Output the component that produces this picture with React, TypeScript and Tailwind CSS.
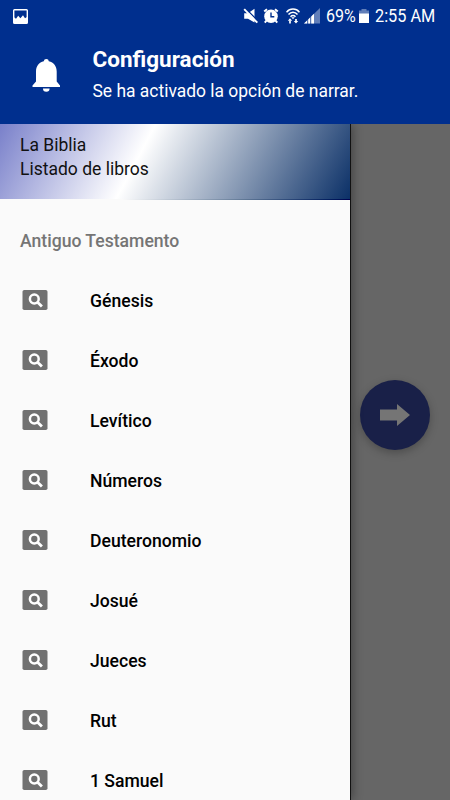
const books = [
  "Génesis",
  "Éxodo",
  "Levítico",
  "Números",
  "Deuteronomio",
  "Josué",
  "Jueces",
  "Rut",
  "1 Samuel",
];

function StatusBar() {
  return (
    <div className="flex h-8 items-center pl-[13px] pr-[14px]">
      <svg className="h-[15px] w-[15px]" viewBox="0 0 15 15">
        <rect x="0.7" y="0.7" width="13.6" height="13.6" rx="0.8" fill="none" stroke="#fff" strokeWidth="1.4" />
        <path d="M1 14V8.2L3 9.7l2.2-3 2.2 2.5L10 6.2l2 3 2-1.2v6z" fill="#fff" />
      </svg>
      <svg className="ml-auto h-4 w-4" viewBox="0 0 16 16">
        <path d="M1.2 5.2h3.8L11.5 0.8v13.7L5 10.7H1.2z" fill="#fff" />
        <path d="M2.3 0.3L15.5 13.5" stroke="#002f8e" strokeWidth="1.5" />
        <path d="M1.2 1.2L14.3 14.7" stroke="#fff" strokeWidth="1.9" />
      </svg>
      <svg className="ml-[4px] h-4 w-4" viewBox="0 0 16 16">
        <circle cx="8" cy="8.2" r="6.8" fill="#fff" />
        <path d="M1.200 3.600L4 1.200M14.800 3.600L12 1.200M3.500 12.500l-1.700 2.200M12.500 12.500l1.700 2.200" stroke="#fff" strokeWidth="2" />
        <path d="M8 4.500v4.200h3.300" fill="none" stroke="#002f8e" strokeWidth="1.400" />
      </svg>
      <svg className="ml-[7px] h-4 w-[14px]" viewBox="0 0 14 16" fill="none" stroke="#fff">
        <path d="M0.5 4.2C4 0 10 0 13.5 4.2M2.5 6.5c2.500-3 6.500-3 9 0M4.500 8.700c1.500-1.600 3.500-1.600 5 0" strokeWidth="1.5" />
        <path d="M5.3 9.2h3.400L7 11.200z" fill="#fff" stroke="none" />
        <path d="M1.8 12.7h4.400L4 10.300zM7.800 13h4.400L10 15.500z" fill="#fff" stroke="none" />
        <path d="M4 12.5v3M10 11v2.200" strokeWidth="1.700" />
      </svg>
      <svg className="ml-[4px] h-4 w-4" viewBox="0 0 16 16">
        <path d="M0 15.5L16 0v15.500z" fill="#fff" opacity="0.38" />
        <path d="M0 15.5L10 5.800v9.700z" fill="#fff" />
        <path d="M3.7 11v5M6.700 8v8" stroke="#002f8e" strokeWidth="0.8" />
      </svg>
      <span className="ml-[6px] w-[29px] origin-left scale-x-[0.89] whitespace-nowrap text-[18px] leading-none">
        69%
      </span>
      <svg className="ml-[4px] h-4 w-[10px]" viewBox="0 0 10 16">
        <path d="M2.5 1h5v1.500H10V6H0V2.500h2.500z" fill="#fff" opacity="0.38" />
        <path d="M0 5.500h10V15H0z" fill="#fff" />
      </svg>
      <span className="ml-[6px] w-[61px] origin-left scale-x-[0.905] whitespace-nowrap text-[18px] leading-none">
        2:55 AM
      </span>
    </div>
  );
}

function Notification() {
  return (
    <header className="h-[124px] bg-[#002f8e] text-white">
      <StatusBar />
      <div className="flex">
        <svg className="ml-[32px] mt-[27px] h-[33px] w-[29px]" viewBox="0 0 29 33" fill="#fff">
          <path d="M14.3 0a2.5 2.5 0 0 0-2.5 2.3C7 3.4 4 7.3 4 12.5v10L0.5 26.5V28h27.5v-1.5L24.7 22.5v-10c0-5.200-3-9.100-7.900-10.200A2.500 2.500 0 0 0 14.300 0z" />
          <path d="M11 29.500h6.600a3.300 3.300 0 0 1-6.600 0z" />
        </svg>
        <div className="ml-[31.5px] mt-[11px]">
          <h1 className="text-[22.5px] font-bold leading-[32px]">Configuración</h1>
          <p className="text-[17.45px] leading-[32px]">Se ha activado la opción de narrar.</p>
        </div>
      </div>
    </header>
  );
}

function BookItem({ title }: { title: string }) {
  return (
    <li className="flex h-[60px] items-center pl-[22px]">
      <svg className="h-5 w-[26px]" viewBox="0 0 26 20">
        <rect x="0.5" width="25" height="20" rx="1.8" fill="#717171" />
        <circle cx="12.3" cy="9" r="4.4" fill="none" stroke="#fff" strokeWidth="2.5" />
        <path d="M15.3 12l4.600 4.600" stroke="#fff" strokeWidth="2.8" />
      </svg>
      <span className="ml-[42px] pt-[2px] text-[17.6px] font-medium text-black">{title}</span>
    </li>
  );
}

function Drawer() {
  return (
    <aside className="z-10 w-[350px] shrink-0 bg-[#fafafa] shadow-[1px_0_0_#111,2px_0_10px_rgba(0,0,0,0.4)]">
      <div className="h-[75px] bg-[linear-gradient(118deg,#7980ca_0%,#ffffff_40%,#0b3067_100%)] pl-5 pt-[9px] text-[17.5px] leading-6 text-[#111]">
        <p>La Biblia</p>
        <p>Listado de libros</p>
      </div>
      <div className="h-px bg-linear-to-r from-[#fafafa] from-35% via-[#5f7795] via-70% to-[#000050]" />
      <h2 className="flex h-[70px] items-center pl-5 pt-[12px] text-[17.6px] font-medium text-[#757575]">
        Antiguo Testamento
      </h2>
      <ul>
        {books.map((book) => (
          <BookItem key={book} title={book} />
        ))}
      </ul>
    </aside>
  );
}

export default function App() {
  return (
    <div className="flex h-[800px] w-[450px] flex-col overflow-hidden font-[Roboto,sans-serif]">
      <Notification />
      <main className="flex min-h-0 flex-1 overflow-hidden bg-[#666]">
        <Drawer />
        <div className="pl-[10px] pt-[256px]">
          <button className="flex size-[70px] items-center justify-center rounded-full bg-[#192048] shadow-[0_3px_9px_rgba(0,0,0,0.25)]">
            <svg className="h-[22px] w-[30px]" viewBox="0 0 30 22" fill="#757575">
              <path d="M0 5.500h17V0l13 11-13 11v-5.500H0z" />
            </svg>
          </button>
        </div>
      </main>
    </div>
  );
}
